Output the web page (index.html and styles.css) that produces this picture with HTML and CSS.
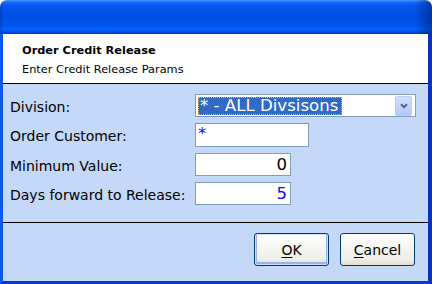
FILE: index.html
```html
<!DOCTYPE html>
<html>
<head>
<meta charset="utf-8">
<link rel="stylesheet" href="styles.css">
</head>
<body>
<div class="window">
  <div class="titlebar"></div>
  <div class="frame">
    <div class="header">
      <div class="h-title">Order Credit Release</div>
      <div class="h-sub">Enter Credit Release Params</div>
    </div>
    <div class="form">
      <div class="row">
        <label class="lbl">Division:</label>
        <div class="select">
          <span class="sel-text">* - ALL Divsisons</span>
          <span class="drop"><svg width="8" height="6" viewBox="0 0 8 6"><path d="M1 1.2 L4 4.2 L7 1.2" fill="none" stroke="#4d6185" stroke-width="2"/></svg></span>
        </div>
      </div>
      <div class="row">
        <label class="lbl">Order Customer:</label>
        <input class="field cust blue" value="*">
      </div>
      <div class="row">
        <label class="lbl">Minimum Value:</label>
        <input class="field num" value="0">
      </div>
      <div class="row">
        <label class="lbl">Days forward to Release:</label>
        <input class="field num blue" value="5">
      </div>
    </div>
    <div class="footer">
      <button class="btn default"><u>O</u>K</button>
      <button class="btn"><u>C</u>ancel</button>
    </div>
  </div>
</div>
</body>
</html>
```
FILE: styles.css
```css
html, body {
  margin: 0;
  padding: 0;
  background: #ffffff;
}
body {
  width: 432px;
  height: 284px;
  overflow: hidden;
  font-family: "DejaVu Sans", Verdana, sans-serif;
}
.window {
  width: 432px;
  height: 284px;
  display: flex;
  flex-direction: column;
}
.titlebar {
  height: 34px;
  flex: none;
  border-radius: 7px 7px 0 0;
  background:
    linear-gradient(to right, rgba(0,20,120,0.25) 0, rgba(0,0,0,0) 4px, rgba(0,0,0,0) 96%, rgba(0,10,90,0.45) 100%),
    linear-gradient(to bottom, #4a9bff 0, #1a6cf5 2px, #0558ee 5px, #0052e6 12px, #0050e3 20px, #0058ec 26px, #0066ff 29px, #0058f2 31px, #0044d0 33px, #003cc0 34px);
}
.frame {
  flex: 1;
  display: flex;
  flex-direction: column;
  background: #c4d9f8;
  border-left: 3px solid #0a58f0;
  border-right: 4px solid #0532c2;
  border-bottom: 3px solid #0838cc;
}
.header {
  height: 50px;
  box-sizing: border-box;
  background: #ffffff;
  border-bottom: 1px solid #000000;
  padding: 9px 0 0 19px;
  font-size: 11.35px;
  color: #000;
}
.h-title {
  font-weight: bold;
  line-height: 14px;
}
.h-sub {
  margin-top: 5px;
  line-height: 14px;
}
.form {
  height: 138px;
  box-sizing: border-box;
  padding: 10px 0 0 7px;
  display: flex;
  flex-direction: column;
  gap: 6px;
}
.row {
  display: flex;
  align-items: center;
}
.lbl {
  width: 185px;
  flex: none;
  font-size: 14px;
  color: #000;
  padding-top: 2px;
}
.select {
  width: 221px;
  height: 23px;
  box-sizing: border-box;
  border: 1px solid #7f9db9;
  background: #ffffff;
  display: flex;
  align-items: center;
  padding: 0 2px 0 2px;
}
.sel-text {
  height: 18px;
  box-sizing: border-box;
  background: #316ac5;
  border: 1px dotted #e0b058;
  color: #ffffff;
  font-size: 16.6px;
  line-height: 16px;
  padding: 0 3px 0 1px;
  white-space: nowrap;
}
.drop {
  margin-left: auto;
  width: 17px;
  height: 20px;
  box-sizing: border-box;
  border: 1px solid #bccbf0;
  border-radius: 2px;
  background: linear-gradient(to bottom, #d4e0fc 0, #c3d4fb 50%, #b4c8f6 100%);
  display: flex;
  align-items: center;
  justify-content: center;
  margin-right: 1px;
}
.drop svg {
  display: block;
}
.field {
  height: 23px;
  box-sizing: border-box;
  border: 1px solid #7f9db9;
  background: #ffffff;
  margin: 0;
  padding: 0 3px 0 2px;
  font-family: "DejaVu Sans", Verdana, sans-serif;
  font-size: 16.5px;
  color: #000000;
  outline: none;
}
.cust {
  width: 114px;
  height: 24px;
  padding-bottom: 4px;
}
.num {
  width: 96px;
  text-align: right;
}
.blue {
  color: #0a0aff;
}
.footer {
  flex: 1;
  border-top: 1px solid #000000;
  display: flex;
  justify-content: flex-end;
  align-items: flex-start;
  gap: 11px;
  padding: 10px 13px 0 0;
}
.btn {
  width: 75px;
  height: 33px;
  box-sizing: border-box;
  border: 1px solid #003c74;
  border-radius: 3px;
  background: linear-gradient(to bottom, #ffffff 0, #f6f6f2 40%, #efefe9 80%, #e2ded4 100%);
  font-family: "DejaVu Sans", Verdana, sans-serif;
  font-size: 14px;
  color: #000;
  padding: 0;
  margin: 0;
}
.btn u {
  text-decoration-thickness: 1px;
  text-underline-offset: 2px;
}
.default {
  box-shadow: inset 0 0 0 1px #cfe0fb, inset 0 -1px 0 2px #98b2ee;
}
```
